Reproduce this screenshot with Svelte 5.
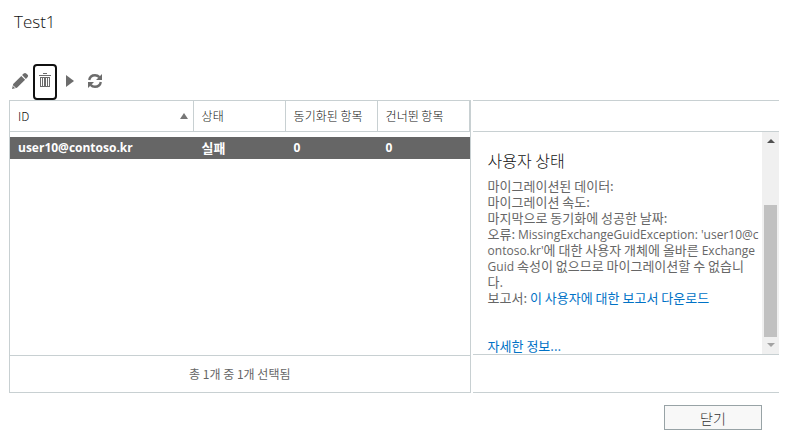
<script>
  let users = $state([
    { id: 'user10@contoso.kr', status: '실패', synced: 0, skipped: 0 }
  ]);
  let selectedId = $state('user10@contoso.kr');
  let sortAsc = $state(true);
  let open = $state(true);

  let selected = $derived(users.find((u) => u.id === selectedId));
  let sorted = $derived(
    [...users].sort((a, b) => a.id.localeCompare(b.id) * (sortAsc ? 1 : -1))
  );

  function removeSelected() {
    users = users.filter((u) => u.id !== selectedId);
    selectedId = null;
  }
</script>

{#if open}
<main class="dialog">
  <h1>Test1</h1>

  <div class="toolbar">
    <button class="tool" aria-label="편집">
      <svg width="18" height="18" viewBox="0 0 18 18">
        <path d="M1 17l1.200-5L10.300 3.900l3.800 3.800L6 15.800zM11.100 3.100l1.600-1.600c.8-.8 1.800-.8 2.500-.1l1.400 1.400c.7.7.7 1.700-.1 2.500l-1.600 1.600z" />
        <path class="cut" d="M1.800 13.400l2.800 2.800" />
      </svg>
    </button>
    <button class="tool focused" aria-label="삭제" onclick={removeSelected}>
      <svg width="14" height="16" viewBox="0 0 14 16">
        <path d="M5 0h4v1H5zM1 2h12v1H1z" />
        <path d="M2 4h10v1H2zM2 5h1v9H2zM11 5h1v9h-1zM3 13h8v1H3z" />
        <path d="M4 5h1v8H4zM6 5h2v8H6zM9 5h1v8H9z" />
      </svg>
    </button>
    <button class="tool" aria-label="시작">
      <svg width="10" height="16" viewBox="0 0 10 16">
        <path d="M1 2l8 6-8 6z" />
      </svg>
    </button>
    <button class="tool" aria-label="새로 고침">
      <svg width="16" height="16" viewBox="0 0 16 16">
        <path class="arc" d="M2.200 7C2.700 4.300 5 2.200 8 2.200c1.800 0 3.300.7 4.400 1.900M13.800 9c-.5 2.700-2.800 4.800-5.800 4.800-1.800 0-3.300-.7-4.400-1.900" />
        <path d="M15 1v6H9zM1 15V9h6z" />
      </svg>
    </button>
  </div>

  <div class="panels">
    <section class="list">
      <table>
        <thead>
          <tr>
            <th class="col-id">
              <button class="sort" onclick={() => (sortAsc = !sortAsc)}>
                <span>ID</span>
                <span class="arrow up" class:flipped={!sortAsc}></span>
              </button>
            </th>
            <th>상태</th>
            <th>동기화된 항목</th>
            <th>건너뛴 항목</th>
          </tr>
        </thead>
        <tbody>
          {#each sorted as user (user.id)}
            <tr class:selected={user.id === selectedId} onclick={() => (selectedId = user.id)}>
              <td class="latin">{user.id}</td>
              <td>{user.status}</td>
              <td class="latin">{user.synced}</td>
              <td class="latin">{user.skipped}</td>
            </tr>
          {/each}
        </tbody>
      </table>
      <div class="summary">총 {users.length}개 중 {selected ? 1 : 0}개 선택됨</div>
    </section>

    <section class="details">
      <div class="details-head"></div>
      <div class="details-body">
        <div class="info">
          {#if selected}
            <h2>사용자 상태</h2>
            <p>마이그레이션된 데이터:</p>
            <p>마이그레이션 속도:</p>
            <p>마지막으로 동기화에 성공한 날짜:</p>
            <p>오류: <span class="latin">MissingExchangeGuidException: '{selected.id}'</span>에 대한 사용자 개체에 올바른 <span class="latin">Exchange Guid</span> 속성이 없으므로 마이그레이션할 수 없습니<br>다.</p>
            <p>보고서: <a href="#report">이 사용자에 대한 보고서 다운로드</a></p>
            <p class="more"><a href="#more">자세한 정보...</a></p>
          {/if}
        </div>
        <div class="scrollbar">
          <span class="arrow up dark"></span>
          <span class="thumb"></span>
          <span class="arrow down"></span>
        </div>
      </div>
      <div class="details-foot"></div>
    </section>
  </div>

  <footer>
    <button class="close" onclick={() => (open = false)}>닫기</button>
  </footer>
</main>
{/if}

<style>
  :global(body) {
    margin: 0;
    background: #fff;
  }
  .dialog {
    box-sizing: border-box;
    display: flex;
    flex-direction: column;
    min-height: 100vh;
    padding: 8px 7px 6px 8px;
    font-family: "Noto Sans CJK KR", "Noto Sans", sans-serif;
    font-size: 13px;
    color: #666;
  }
  h1, h2, p {
    margin: 0;
    font-weight: 400;
  }
  h1 {
    padding-left: 6px;
    font-family: "Open Sans", sans-serif;
    font-size: 17px;
    font-weight: 300;
    line-height: 28px;
    color: #111;
  }
  button {
    font: inherit;
    color: inherit;
    cursor: pointer;
  }
  .latin {
    font-family: "Open Sans", "Noto Sans CJK KR", sans-serif;
    font-size: 12px;
    line-height: 12px;
  }

  .toolbar {
    display: flex;
    gap: 1px;
    margin-top: 28px;
  }
  .tool {
    box-sizing: border-box;
    display: flex;
    align-items: center;
    justify-content: center;
    width: 24px;
    height: 36px;
    padding: 0 0 2px;
    border: 2px solid transparent;
    border-radius: 4px;
    background: none;
  }
  .tool.focused {
    border-color: #101010;
  }
  .tool svg {
    flex: none;
    fill: #6c6c6c;
  }
  .tool .arc {
    fill: none;
    stroke: #6c6c6c;
    stroke-width: 2.4;
  }
  .tool .cut {
    stroke: #fff;
    stroke-width: 1;
  }

  .panels {
    flex: 1;
    display: flex;
    gap: 2px;
    margin-left: 1px;
  }
  .list {
    box-sizing: border-box;
    flex: 3;
    display: flex;
    flex-direction: column;
    min-width: 0;
    border: 1px solid #c8d0d2;
  }
  table {
    width: 100%;
    table-layout: fixed;
    border-collapse: separate;
    border-spacing: 0;
  }
  th {
    box-sizing: border-box;
    width: 92px;
    height: 31px;
    padding: 0 0 0 8px;
    border-right: 1px solid #c8d0d2;
    border-bottom: 1px solid #c8d0d2;
    font-size: 12px;
    font-weight: 300;
    line-height: 16px;
    text-align: left;
    color: #111;
  }
  th.col-id {
    width: auto;
  }
  .sort {
    display: flex;
    align-items: center;
    justify-content: space-between;
    width: 100%;
    padding: 0 5px 0 0;
    border: none;
    background: none;
  }
  tbody::before {
    content: "";
    display: block;
    height: 5px;
  }
  td {
    height: 22px;
    padding: 0 8px;
    line-height: 16px;
  }
  .selected td {
    background: #666;
    color: #fff;
    font-weight: 700;
  }
  .summary {
    margin-top: auto;
    border-top: 1px solid #c8d0d2;
    font-size: 12px;
    line-height: 36px;
    text-align: center;
  }

  .arrow {
    border: 4px solid transparent;
  }
  .arrow.up {
    border-top: none;
    border-bottom: 6px solid #777;
  }
  .arrow.up.flipped {
    transform: rotate(180deg);
  }
  .arrow.up.dark {
    border-bottom: 4px solid #505050;
  }
  .arrow.down {
    border-bottom: none;
    border-top: 4px solid #a3a3a3;
  }

  .details {
    box-sizing: border-box;
    flex: 2;
    display: flex;
    flex-direction: column;
    min-width: 0;
    border-top: 1px solid #c8d0d2;
    border-bottom: 1px solid #c8d0d2;
  }
  .details-head {
    height: 30px;
    border-bottom: 1px solid #c8d0d2;
  }
  .details-foot {
    height: 37px;
    border-top: 1px solid #c8d0d2;
  }
  .details-body {
    flex: 1;
    display: flex;
  }
  .info {
    flex: 1;
    min-width: 0;
    padding: 16px 0 0 15px;
    line-height: 16px;
    word-break: break-all;
  }
  h2 {
    margin-bottom: 6px;
    font-size: 16px;
    font-weight: 300;
    line-height: 24px;
    color: #111;
  }
  a {
    color: #0072c6;
    text-decoration: none;
  }
  .more {
    margin-top: 32px;
  }
  .scrollbar {
    flex: none;
    display: flex;
    flex-direction: column;
    align-items: center;
    width: 17px;
    box-sizing: border-box;
    padding: 7px 0;
    background: #f0f0f0;
  }
  .thumb {
    flex: 1;
    width: 13px;
    margin: 62px 0 6px;
    background: #c1c1c1;
  }

  footer {
    display: flex;
    justify-content: flex-end;
    margin-top: 12px;
    padding-right: 17px;
  }
  .close {
    box-sizing: border-box;
    width: 98px;
    height: 25px;
    padding: 0;
    border: 1px solid #98a3a6;
    background: #f8f8f8;
    font-size: 14px;
    font-weight: 300;
    line-height: 20px;
    color: #333;
  }
</style>
